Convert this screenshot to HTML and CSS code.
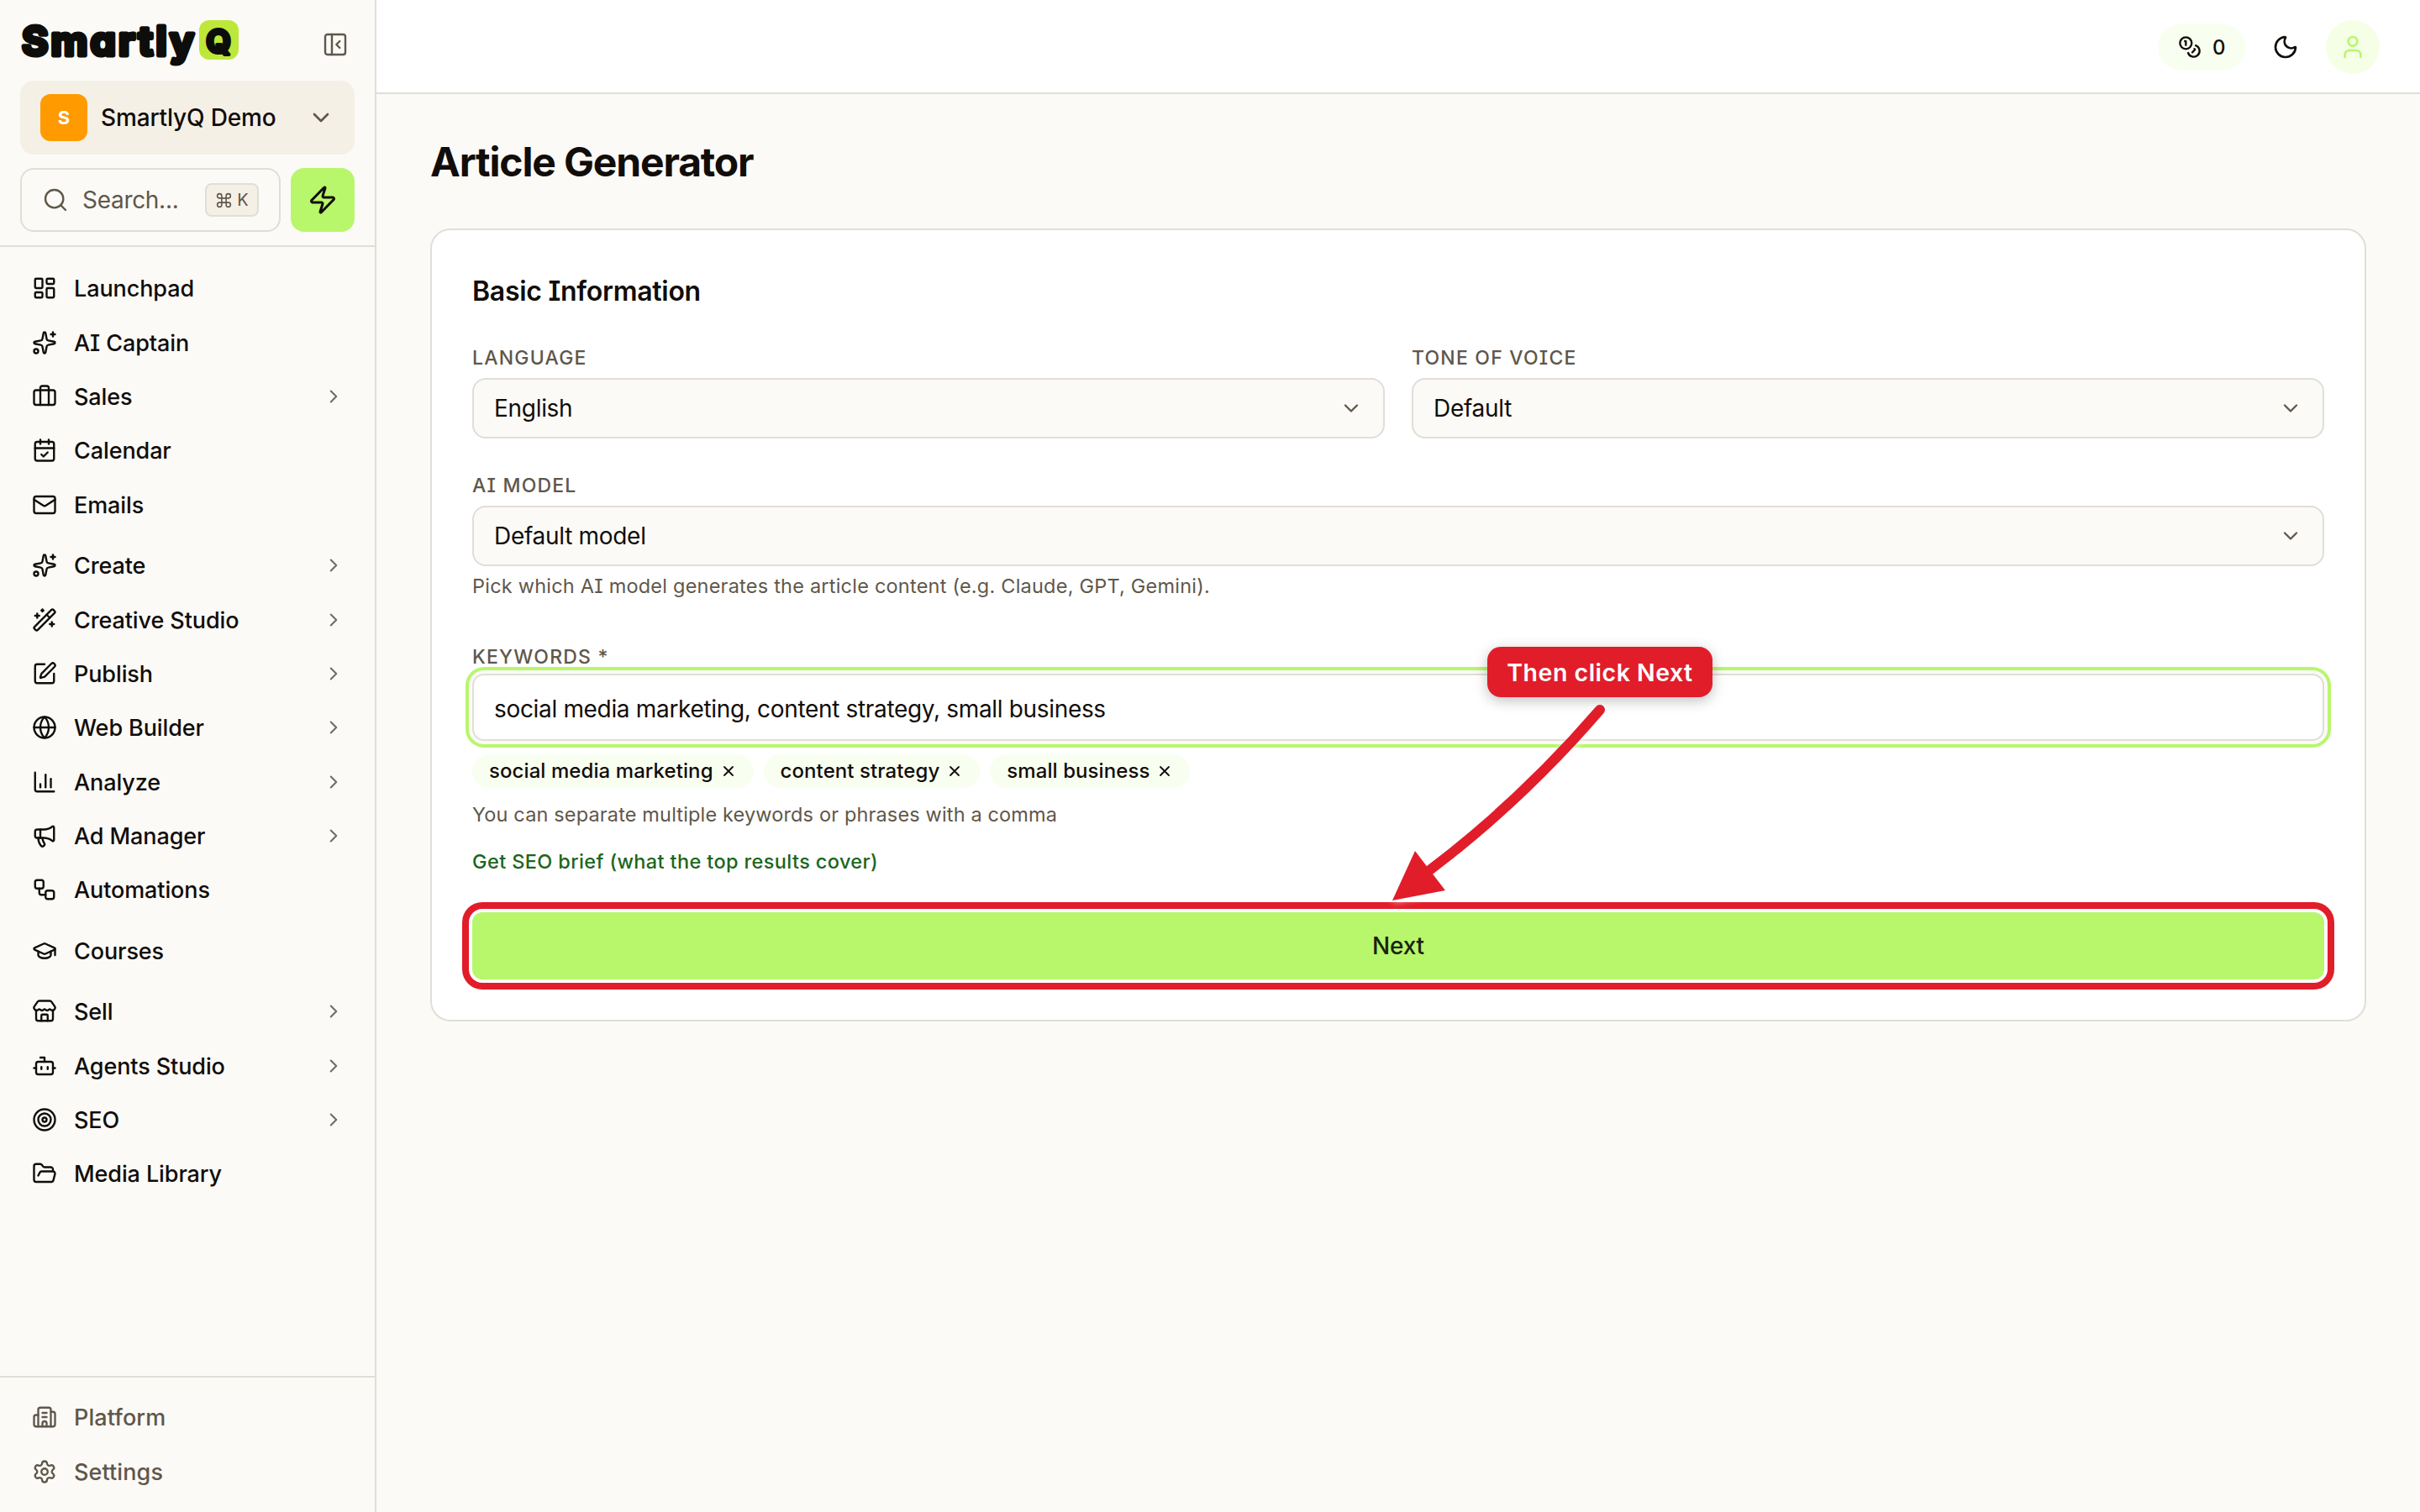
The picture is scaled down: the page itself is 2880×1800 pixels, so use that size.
FILE: index.html
```html
<!DOCTYPE html>
<html lang="en">
<head>
  <meta charset="UTF-8" />
  <meta name="viewport" content="width=device-width, initial-scale=1.0"/>
  <title>Article Generator - SmartlyQ</title>
  <link rel="stylesheet" href="styles.css">
</head>
<body>
  <!-- Sidebar -->
  <aside class="sidebar">
    <div class="sidebar-top">
      <div class="brand">
        <svg class="logo" width="262" height="74" viewBox="0 0 262 74">
          <rect x="213" y="2" width="47" height="47" rx="12" fill="#bde83a"/>
          <text class="logo-text" x="2" y="43.5" textLength="205">Smartly</text>
          <text class="logo-q" x="236" y="40.5" text-anchor="middle">Q</text>
        </svg>
        <svg class="icon collapse" viewBox="0 0 24 24"><rect width="18" height="18" x="3" y="3" rx="2"/><path d="M9 3v18"/><path d="m16 15-3-3 3-3"/></svg>
      </div>

      <div class="workspace">
        <span class="workspace-avatar">S</span>
        <span class="workspace-name">SmartlyQ Demo</span>
        <svg class="icon" viewBox="0 0 24 24"><path d="m6 9 6 6 6-6"/></svg>
      </div>

      <div class="search-row">
        <div class="search">
          <svg class="icon" viewBox="0 0 24 24"><circle cx="11" cy="11" r="8"/><path d="m21 21-4.3-4.3"/></svg>
          <span class="search-text">Search...</span>
          <span class="kbd">
            <svg class="icon" viewBox="0 0 24 24"><path d="M15 6v12a3 3 0 1 0 3-3H6a3 3 0 1 0 3 3V6a3 3 0 1 0-3 3h12a3 3 0 1 0-3-3"/></svg>
            <span>K</span>
          </span>
        </div>
        <button class="zap">
          <svg class="icon" viewBox="0 0 24 24"><path d="M4 14a1 1 0 0 1-.78-1.63l9.9-10.2a.5.5 0 0 1 .86.46l-1.92 6.02A1 1 0 0 0 13 10h7a1 1 0 0 1 .78 1.63l-9.9 10.2a.5.5 0 0 1-.86-.46l1.92-6.02A1 1 0 0 0 11 14z"/></svg>
        </button>
      </div>
    </div>

    <nav class="nav">
      <div class="nav-group">
        <a class="nav-item">
          <svg class="icon" viewBox="0 0 24 24"><rect width="7" height="9" x="3" y="3" rx="1"/><rect width="7" height="5" x="14" y="3" rx="1"/><rect width="7" height="9" x="14" y="12" rx="1"/><rect width="7" height="5" x="3" y="16" rx="1"/></svg>
          <span>Launchpad</span>
        </a>
        <a class="nav-item">
          <svg class="icon" viewBox="0 0 24 24"><path d="M11.017 2.814a1 1 0 0 1 1.966 0l1.051 5.558a2 2 0 0 0 1.594 1.594l5.558 1.051a1 1 0 0 1 0 1.966l-5.558 1.051a2 2 0 0 0-1.594 1.594l-1.051 5.558a1 1 0 0 1-1.966 0l-1.051-5.558a2 2 0 0 0-1.594-1.594l-5.558-1.051a1 1 0 0 1 0-1.966l5.558-1.051a2 2 0 0 0 1.594-1.594z"/><path d="M20 2v4"/><path d="M22 4h-4"/><circle cx="4" cy="20" r="2"/></svg>
          <span>AI Captain</span>
        </a>
        <a class="nav-item">
          <svg class="icon" viewBox="0 0 24 24"><path d="M16 20V4a2 2 0 0 0-2-2h-4a2 2 0 0 0-2 2v16"/><rect width="20" height="14" x="2" y="6" rx="2"/></svg>
          <span>Sales</span>
          <svg class="icon chevron" viewBox="0 0 24 24"><path d="m9 18 6-6-6-6"/></svg>
        </a>
        <a class="nav-item">
          <svg class="icon" viewBox="0 0 24 24"><path d="M8 2v4"/><path d="M16 2v4"/><rect width="18" height="18" x="3" y="4" rx="2"/><path d="M3 10h18"/><path d="m9 16 2 2 4-4"/></svg>
          <span>Calendar</span>
        </a>
        <a class="nav-item">
          <svg class="icon" viewBox="0 0 24 24"><rect width="20" height="16" x="2" y="4" rx="2"/><path d="m22 7-8.991 5.727a2 2 0 0 1-2.009 0L2 7"/></svg>
          <span>Emails</span>
        </a>
      </div>

      <div class="nav-group">
        <a class="nav-item">
          <svg class="icon" viewBox="0 0 24 24"><path d="M11.017 2.814a1 1 0 0 1 1.966 0l1.051 5.558a2 2 0 0 0 1.594 1.594l5.558 1.051a1 1 0 0 1 0 1.966l-5.558 1.051a2 2 0 0 0-1.594 1.594l-1.051 5.558a1 1 0 0 1-1.966 0l-1.051-5.558a2 2 0 0 0-1.594-1.594l-5.558-1.051a1 1 0 0 1 0-1.966l5.558-1.051a2 2 0 0 0 1.594-1.594z"/><path d="M20 2v4"/><path d="M22 4h-4"/><circle cx="4" cy="20" r="2"/></svg>
          <span>Create</span>
          <svg class="icon chevron" viewBox="0 0 24 24"><path d="m9 18 6-6-6-6"/></svg>
        </a>
        <a class="nav-item">
          <svg class="icon" viewBox="0 0 24 24"><path d="m21.64 3.64-1.28-1.28a1.21 1.21 0 0 0-1.72 0L2.36 18.64a1.21 1.21 0 0 0 0 1.72l1.28 1.28a1.2 1.2 0 0 0 1.72 0L21.64 5.36a1.2 1.2 0 0 0 0-1.72"/><path d="m14 7 3 3"/><path d="M5 6v4"/><path d="M19 14v4"/><path d="M10 2v2"/><path d="M7 8H3"/><path d="M21 16h-4"/><path d="M11 3H9"/></svg>
          <span>Creative Studio</span>
          <svg class="icon chevron" viewBox="0 0 24 24"><path d="m9 18 6-6-6-6"/></svg>
        </a>
        <a class="nav-item">
          <svg class="icon" viewBox="0 0 24 24"><path d="M12 3H5a2 2 0 0 0-2 2v14a2 2 0 0 0 2 2h14a2 2 0 0 0 2-2v-7"/><path d="M18.375 2.625a1 1 0 0 1 3 3l-9.013 9.014a2 2 0 0 1-.853.505l-2.873.84a.5.5 0 0 1-.62-.62l.84-2.873a2 2 0 0 1 .506-.852z"/></svg>
          <span>Publish</span>
          <svg class="icon chevron" viewBox="0 0 24 24"><path d="m9 18 6-6-6-6"/></svg>
        </a>
        <a class="nav-item">
          <svg class="icon" viewBox="0 0 24 24"><circle cx="12" cy="12" r="10"/><path d="M12 2a14.5 14.5 0 0 0 0 20 14.5 14.5 0 0 0 0-20"/><path d="M2 12h20"/></svg>
          <span>Web Builder</span>
          <svg class="icon chevron" viewBox="0 0 24 24"><path d="m9 18 6-6-6-6"/></svg>
        </a>
        <a class="nav-item">
          <svg class="icon" viewBox="0 0 24 24"><path d="M3 3v16a2 2 0 0 0 2 2h16"/><path d="M18 17V9"/><path d="M13 17V5"/><path d="M8 17v-3"/></svg>
          <span>Analyze</span>
          <svg class="icon chevron" viewBox="0 0 24 24"><path d="m9 18 6-6-6-6"/></svg>
        </a>
        <a class="nav-item">
          <svg class="icon" viewBox="0 0 24 24"><path d="M11 6a13 13 0 0 0 8.4-2.8A1 1 0 0 1 21 4v12a1 1 0 0 1-1.6.8A13 13 0 0 0 11 14H5a2 2 0 0 1-2-2V8a2 2 0 0 1 2-2z"/><path d="M6 14a12 12 0 0 0 2.4 7.2 2 2 0 0 0 3.2-2.4A8 8 0 0 1 10 14"/><path d="M8 6v8"/></svg>
          <span>Ad Manager</span>
          <svg class="icon chevron" viewBox="0 0 24 24"><path d="m9 18 6-6-6-6"/></svg>
        </a>
        <a class="nav-item">
          <svg class="icon" viewBox="0 0 24 24"><rect width="8" height="8" x="3" y="3" rx="2"/><path d="M7 11v4a2 2 0 0 0 2 2h4"/><rect width="8" height="8" x="13" y="13" rx="2"/></svg>
          <span>Automations</span>
        </a>
      </div>

      <div class="nav-group">
        <a class="nav-item">
          <svg class="icon" viewBox="0 0 24 24"><path d="M21.42 10.922a1 1 0 0 0-.019-1.838L12.83 5.18a2 2 0 0 0-1.66 0L2.6 9.08a1 1 0 0 0 0 1.832l8.57 3.908a2 2 0 0 0 1.66 0z"/><path d="M22 10v6"/><path d="M6 12.5V16a6 3 0 0 0 12 0v-3.5"/></svg>
          <span>Courses</span>
        </a>
      </div>

      <div class="nav-group">
        <a class="nav-item">
          <svg class="icon" viewBox="0 0 24 24"><path d="M15 21v-5a1 1 0 0 0-1-1h-4a1 1 0 0 0-1 1v5"/><path d="M17.774 10.31a1.12 1.12 0 0 0-1.549 0 2.5 2.5 0 0 1-3.451 0 1.12 1.12 0 0 0-1.548 0 2.5 2.5 0 0 1-3.452 0 1.12 1.12 0 0 0-1.549 0 2.5 2.5 0 0 1-3.77-3.248l2.889-4.184A2 2 0 0 1 7 2h10a2 2 0 0 1 1.653.873l2.895 4.192a2.5 2.5 0 0 1-3.774 3.244"/><path d="M4 10.95V19a2 2 0 0 0 2 2h12a2 2 0 0 0 2-2v-8.05"/></svg>
          <span>Sell</span>
          <svg class="icon chevron" viewBox="0 0 24 24"><path d="m9 18 6-6-6-6"/></svg>
        </a>
        <a class="nav-item">
          <svg class="icon" viewBox="0 0 24 24"><path d="M12 8V4H8"/><rect width="16" height="12" x="4" y="8" rx="2"/><path d="M2 14h2"/><path d="M20 14h2"/><path d="M15 13v2"/><path d="M9 13v2"/></svg>
          <span>Agents Studio</span>
          <svg class="icon chevron" viewBox="0 0 24 24"><path d="m9 18 6-6-6-6"/></svg>
        </a>
        <a class="nav-item">
          <svg class="icon" viewBox="0 0 24 24"><circle cx="12" cy="12" r="10"/><circle cx="12" cy="12" r="6"/><circle cx="12" cy="12" r="2"/></svg>
          <span>SEO</span>
          <svg class="icon chevron" viewBox="0 0 24 24"><path d="m9 18 6-6-6-6"/></svg>
        </a>
        <a class="nav-item">
          <svg class="icon" viewBox="0 0 24 24"><path d="m6 14 1.5-2.9A2 2 0 0 1 9.24 10H20a2 2 0 0 1 1.94 2.5l-1.54 6a2 2 0 0 1-1.95 1.5H4a2 2 0 0 1-2-2V5a2 2 0 0 1 2-2h3.9a2 2 0 0 1 1.69.9l.81 1.2a2 2 0 0 0 1.67.9H18a2 2 0 0 1 2 2v2"/></svg>
          <span>Media Library</span>
        </a>
      </div>
    </nav>

    <div class="sidebar-bottom">
      <a class="nav-item">
        <svg class="icon" viewBox="0 0 24 24"><path d="M10 12h4"/><path d="M10 8h4"/><path d="M14 21v-3a2 2 0 0 0-4 0v3"/><path d="M6 10H4a2 2 0 0 0-2 2v7a2 2 0 0 0 2 2h16a2 2 0 0 0 2-2V9a2 2 0 0 0-2-2h-2"/><path d="M6 21V5a2 2 0 0 1 2-2h8a2 2 0 0 1 2 2v16"/></svg>
        <span>Platform</span>
      </a>
      <a class="nav-item">
        <svg class="icon" viewBox="0 0 24 24"><path d="M9.671 4.136a2.34 2.34 0 0 1 4.659 0 2.34 2.34 0 0 0 3.319 1.915 2.34 2.34 0 0 1 2.33 4.033 2.34 2.34 0 0 0 0 3.831 2.34 2.34 0 0 1-2.33 4.033 2.34 2.34 0 0 0-3.319 1.915 2.34 2.34 0 0 1-4.659 0 2.34 2.34 0 0 0-3.32-1.915 2.34 2.34 0 0 1-2.33-4.033 2.34 2.34 0 0 0 0-3.831A2.34 2.34 0 0 1 6.35 6.051a2.34 2.34 0 0 0 3.319-1.915"/><circle cx="12" cy="12" r="3"/></svg>
        <span>Settings</span>
      </a>
    </div>
  </aside>

  <!-- Main -->
  <div class="main">
    <header class="topbar">
      <div class="credits">
        <svg class="icon" viewBox="0 0 24 24"><circle cx="8" cy="8" r="6"/><path d="M18.09 10.37A6 6 0 1 1 10.34 18"/><path d="M7 6h1v4"/><path d="m16.71 13.88.7.71-2.82 2.82"/></svg>
        <span>0</span>
      </div>
      <svg class="icon moon" viewBox="0 0 24 24"><path d="M20.985 12.486a9 9 0 1 1-9.473-9.472c.405-.022.617.46.402.803a6 6 0 0 0 8.268 8.268c.344-.215.825-.004.803.401"/></svg>
      <div class="user">
        <svg class="icon" viewBox="0 0 24 24"><path d="M19 21v-2a4 4 0 0 0-4-4H9a4 4 0 0 0-4 4v2"/><circle cx="12" cy="7" r="4"/></svg>
      </div>
    </header>

    <main class="content">
      <h1>Article Generator</h1>

      <section class="card">
        <h2>Basic Information</h2>

        <div class="row">
          <div class="field">
            <label>LANGUAGE</label>
            <div class="select">
              <span>English</span>
              <svg class="icon" viewBox="0 0 24 24"><path d="m6 9 6 6 6-6"/></svg>
            </div>
          </div>
          <div class="field">
            <label>TONE OF VOICE</label>
            <div class="select">
              <span>Default</span>
              <svg class="icon" viewBox="0 0 24 24"><path d="m6 9 6 6 6-6"/></svg>
            </div>
          </div>
        </div>

        <div class="field model">
          <label>AI MODEL</label>
          <div class="select">
            <span>Default model</span>
            <svg class="icon" viewBox="0 0 24 24"><path d="m6 9 6 6 6-6"/></svg>
          </div>
          <p class="help">Pick which AI model generates the article content (e.g. Claude, GPT, Gemini).</p>
        </div>

        <div class="field keywords">
          <label>KEYWORDS *</label>
          <input type="text" value="social media marketing, content strategy, small business">
          <div class="tags">
            <span class="tag">social media marketing <svg class="icon" viewBox="0 0 14 14"><path d="M2 2l10 10M12 2L2 12"/></svg></span>
            <span class="tag">content strategy <svg class="icon" viewBox="0 0 14 14"><path d="M2 2l10 10M12 2L2 12"/></svg></span>
            <span class="tag">small business <svg class="icon" viewBox="0 0 14 14"><path d="M2 2l10 10M12 2L2 12"/></svg></span>
          </div>
          <p class="help">You can separate multiple keywords or phrases with a comma</p>
        </div>

        <a class="brief">Get SEO brief (what the top results cover)</a>

        <button class="next">Next</button>

        <!-- Walkthrough hint -->
        <div class="hint">Then click Next</div>
        <svg class="hint-arrow" width="300" height="260" viewBox="0 0 300 260">
          <path d="M264 25Q171 133 60 217" fill="none" stroke="#e11d2a" stroke-width="12" stroke-linecap="round"/>
          <path d="M17 252L44 193L80 240Z" fill="#e11d2a"/>
        </svg>
      </section>
    </main>
  </div>
</body>
</html>
```

FILE: styles.css
```css
:root {
  --bg: #fbfaf7;
  --border: #e0ded7;
  --text: #110d0a;
  --muted: #5f574a;
  --lime: #b8f66c;
  --soft: #f8fff0;
  --red: #e11d2a;
}

* {
  box-sizing: border-box;
}

body {
  margin: 0;
  display: flex;
  height: 1800px;
  background: var(--bg);
  color: var(--text);
  font-family: Inter, "Liberation Sans", sans-serif;
  font-size: 28px;
  font-feature-settings: "cv08";
  overflow: hidden;
}

h1, h2, p {
  margin: 0;
}

button {
  border: none;
  font: inherit;
  color: inherit;
  padding: 0;
}

.icon {
  display: block;
  flex: none;
  width: 32px;
  height: 32px;
  fill: none;
  stroke: currentColor;
  stroke-width: 2;
  stroke-linecap: round;
  stroke-linejoin: round;
}

/* Sidebar */
.sidebar {
  width: 448px;
  flex: none;
  display: flex;
  flex-direction: column;
  border-right: 2px solid var(--border);
}

.sidebar-top {
  height: 294px;
  padding: 22px 24px 0;
  border-bottom: 2px solid var(--border);
}

.brand {
  display: flex;
  justify-content: space-between;
  height: 74px;
  padding-right: 7px;
}

.logo {
  overflow: visible;
}

.collapse {
  margin-top: 15px;
  color: var(--muted);
  stroke-width: 1.8;
}

.logo-text,
.logo-q {
  font-weight: 700;
  font-size: 48px;
  fill: #0d0d0b;
  stroke: #0d0d0b;
  stroke-width: 5;
  stroke-linejoin: round;
  font-feature-settings: "cv11";
}

.logo-q {
  font-size: 38px;
  stroke-width: 4;
}

.workspace {
  display: flex;
  align-items: center;
  height: 88px;
  padding: 0 24px;
  background: #f5f0e6;
  border-radius: 16px;
  font-weight: 500;
  letter-spacing: -0.15px;
}

.workspace-avatar {
  width: 56px;
  height: 56px;
  border-radius: 12px;
  background: #ff9a00;
  color: #fff;
  font-size: 22px;
  font-weight: 700;
  display: flex;
  align-items: center;
  justify-content: center;
}

.workspace-name {
  flex: 1;
  margin-left: 16px;
}

.workspace .icon {
  color: var(--muted);
}

.search-row {
  display: flex;
  gap: 12px;
  margin-top: 16px;
}

.search {
  flex: 1;
  display: flex;
  align-items: center;
  height: 76px;
  padding: 0 24px;
  border: 2px solid var(--border);
  border-radius: 16px;
  color: var(--muted);
}

.search .icon {
  stroke-width: 1.8;
}

.search-text {
  flex: 1;
  margin-left: 16px;
  letter-spacing: -0.3px;
}

.kbd {
  display: flex;
  align-items: center;
  justify-content: center;
  gap: 5px;
  width: 64px;
  height: 40px;
  border: 2px solid var(--border);
  border-radius: 8px;
  background: #f5f0e6;
  font-size: 20px;
}

.kbd .icon {
  width: 21px;
  height: 21px;
}

.zap {
  width: 76px;
  height: 76px;
  border-radius: 16px;
  background: var(--lime);
  display: flex;
  align-items: center;
  justify-content: center;
}

.zap .icon {
  width: 36px;
  height: 36px;
}

.nav {
  flex: 1;
  padding-top: 17px;
}

.nav-group {
  margin-bottom: 8px;
}

.nav-item {
  display: flex;
  align-items: center;
  height: 64.4px;
  padding: 0 34px 0 38px;
  font-size: 27px;
  font-weight: 500;
  letter-spacing: -0.1px;
}

.nav-item span {
  padding-top: 1px;
}

.nav-item .icon {
  width: 30px;
  height: 30px;
  margin-right: 20px;
  stroke-width: 1.9;
}

.nav-item .chevron {
  width: 26px;
  height: 26px;
  margin: 0 2px 0 auto;
  color: #6f6c66;
}

.sidebar-bottom {
  height: 162px;
  padding-top: 15px;
  border-top: 2px solid var(--border);
  color: var(--muted);
}

.sidebar-bottom .nav-item {
  letter-spacing: 0.1px;
}

/* Top bar */
.main {
  flex: 1;
}

.topbar {
  display: flex;
  align-items: center;
  justify-content: flex-end;
  height: 112px;
  padding: 2px 48px 0 0;
  background: #fff;
  border-bottom: 2px solid var(--border);
}

.credits {
  display: flex;
  align-items: center;
  gap: 13px;
  width: 104px;
  height: 56px;
  padding-left: 24px;
  border-radius: 28px;
  background: var(--soft);
  font-size: 24px;
  font-weight: 500;
}

.credits .icon {
  width: 28px;
  height: 28px;
}

.moon {
  margin: 0 32px;
}

.user {
  display: flex;
  align-items: center;
  justify-content: center;
  width: 64px;
  height: 64px;
  border-radius: 50%;
  background: #f4ffe6;
  color: var(--lime);
}

/* Content */
.content {
  padding: 49px 64px;
}

h1 {
  font-size: 48px;
  line-height: 64px;
  font-weight: 700;
  letter-spacing: -1.15px;
}

.card {
  position: relative;
  margin-top: 47px;
  padding: 48px;
  background: #fff;
  border: 2px solid var(--border);
  border-radius: 24px;
}

h2 {
  font-size: 32px;
  line-height: 48px;
  font-weight: 600;
  letter-spacing: -0.28px;
  padding-top: 1px;
  margin-bottom: 39px;
}

.row {
  display: grid;
  grid-template-columns: 1fr 1fr;
  gap: 32px;
}

label {
  display: block;
  margin-bottom: 8px;
  color: var(--muted);
  font-size: 23px;
  line-height: 32px;
  font-weight: 500;
  letter-spacing: 1.2px;
}

.select {
  display: flex;
  align-items: center;
  justify-content: space-between;
  height: 72px;
  padding: 0 24px;
  background: var(--bg);
  border: 2px solid var(--border);
  border-radius: 16px;
  letter-spacing: -0.3px;
}

.select .icon {
  width: 28px;
  height: 28px;
  color: var(--muted);
}

.model {
  margin-top: 40px;
}

.help {
  color: var(--muted);
  font-size: 23.5px;
  line-height: 32px;
  letter-spacing: 0.15px;
}

.model .help {
  margin-top: 8px;
  letter-spacing: 0.22px;
}

.keywords {
  margin-top: 52px;
}

.keywords label {
  margin-bottom: 4px;
}

input {
  display: block;
  width: 100%;
  height: 80px;
  padding: 4px 24px 0;
  border: 2px solid var(--border);
  border-radius: 14px;
  background: #fff;
  box-shadow: 0 0 0 4px var(--bg), 0 0 0 8px var(--lime);
  color: inherit;
  font: inherit;
  letter-spacing: -0.33px;
}

.tags {
  display: flex;
  gap: 12px;
  margin: 16px 0;
}

.tag {
  display: flex;
  align-items: center;
  gap: 11px;
  height: 40px;
  padding: 0 23px 1px 20px;
  border-radius: 20px;
  background: var(--soft);
  font-size: 24px;
  font-weight: 500;
  letter-spacing: 0.08px;
}

.tag .icon {
  width: 14px;
  height: 14px;
  stroke-width: 1.8;
}

.brief {
  display: block;
  margin-top: 24px;
  color: #1c661c;
  font-size: 23.5px;
  line-height: 32px;
  font-weight: 500;
  letter-spacing: 0.38px;
}

.next {
  display: block;
  width: 100%;
  height: 80px;
  margin-top: 44px;
  border-radius: 12px;
  background: var(--lime);
  color: #16240c;
  font-weight: 500;
  letter-spacing: -0.2px;
  box-shadow: 0 0 0 4px #fff, 0 0 0 12px var(--red);
}

/* Hint on top of the form */
.hint {
  position: absolute;
  left: 1256px;
  top: 496px;
  width: 268px;
  height: 60px;
  border-radius: 16px;
  background: var(--red);
  color: #fff;
  font-size: 28.5px;
  line-height: 62px;
  font-weight: 600;
  letter-spacing: 0.5px;
  text-align: center;
  box-shadow: 0 4px 16px rgba(0, 0, 0, 0.25);
}

.hint-arrow {
  position: absolute;
  left: 1126px;
  top: 546px;
  filter: drop-shadow(0 2px 4px rgba(255, 255, 255, 0.8));
}
```
